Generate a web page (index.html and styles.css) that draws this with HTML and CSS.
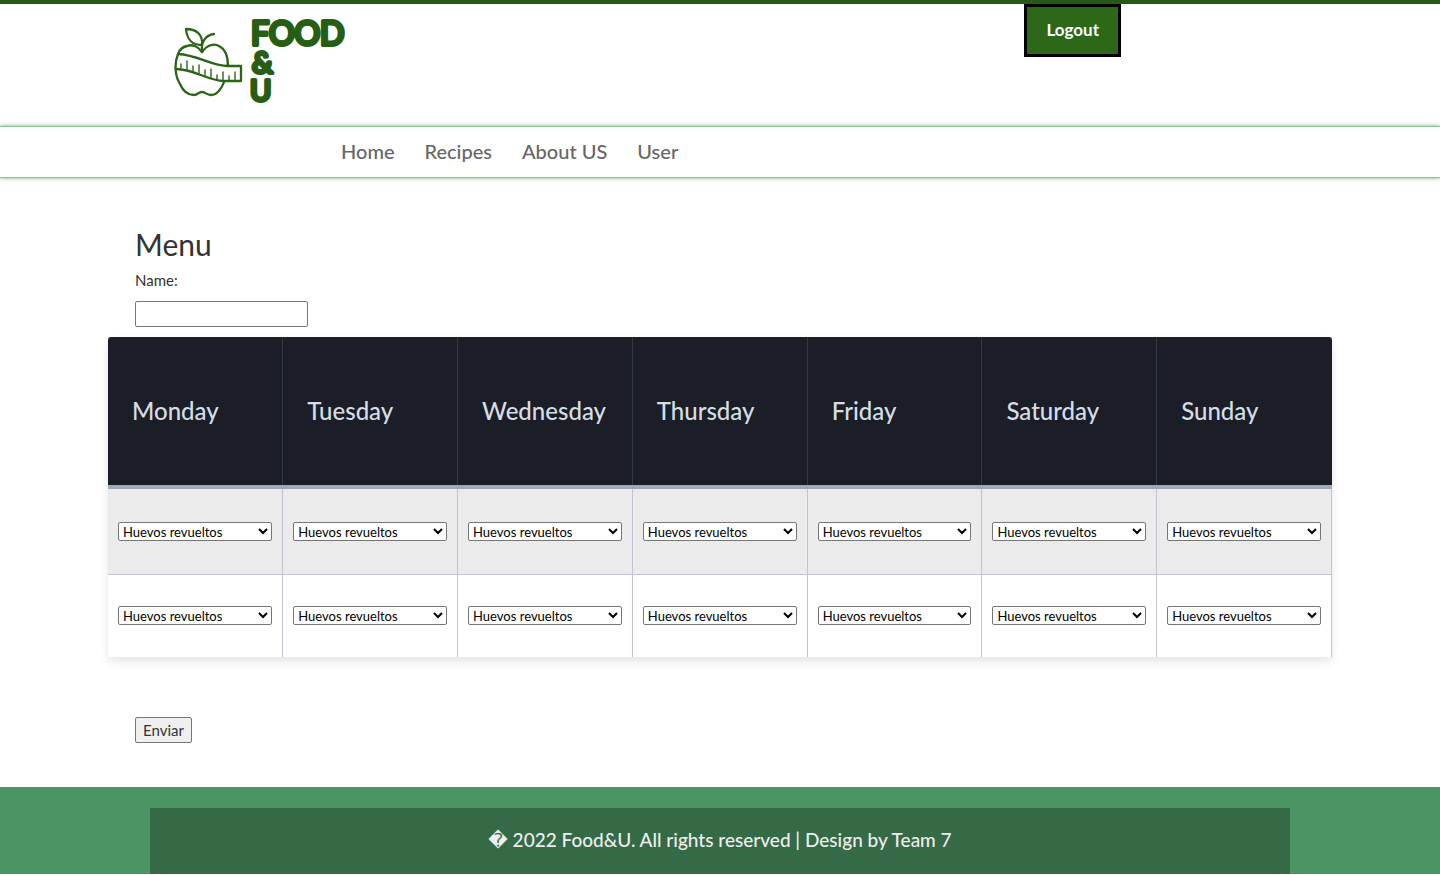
FILE: index.html
```html
<!DOCTYPE html>
<html lang="en">
<head>
<meta charset="utf-8">
<title>Food&amp;U - Menu</title>
<link rel="stylesheet" href="styles.css">
</head>
<body>
<header class="header">
  <div class="header-inner">
    <a class="logo" href="#" aria-label="Food&amp;U">
      <svg width="180" height="112" viewBox="0 -11 180 112">
        <g fill="none" stroke="#2b6416" stroke-width="2.3" stroke-linecap="round" stroke-linejoin="round">
          <path d="M28 37C24 31 18 29 13 31C8 32 5 36 4 39C0 49 1 61 6 69C9 76 14 80 20 80C24 80 24 77 28 77C32 77 32 80 37 80C43 80 48 73 50 67"/>
          <path d="M28 37C33 30 40 28 45 31C51 34 54 41 54 51"/>
          <path d="M28 36C27 28 31 20 40 19M28 30C29 20 23 14 12 14C13 24 17 30 28 30"/>
          <path d="M4 39C24 40 37 51 54 51H67V66H50C34 66 20 54 2 54"/>
          <path stroke-width="1.4" d="M7 53V49M13 54V46M19 56V51M25 58V50M31 61V55M37 63V54M43 65V60M49 66V57M55 66V61M61 66V57"/>
        </g>
        <g class="logo-text">
          <text x="77" y="30" font-size="32">FOOD</text>
          <text x="78" y="58" font-size="29">&amp;</text>
          <text x="76" y="86" font-size="29">U</text>
        </g>
      </svg>
    </a>
    <button class="logout" type="button">Logout</button>
  </div>
</header>
<nav class="nav">
  <ul class="nav-list">
    <li><a href="#">Home</a></li>
    <li><a href="#">Recipes</a></li>
    <li><a href="#">About US</a></li>
    <li><a href="#">User</a></li>
  </ul>
</nav>
<main>
  <form class="menu-form">
    <div class="container">
      <h1 class="title">Menu</h1>
      <label class="name-label" for="name">Name:</label>
      <input class="name-input" id="name" type="text">
    </div>
    <table class="menu-table">
      <thead>
        <tr><th>Monday</th><th>Tuesday</th><th>Wednesday</th><th>Thursday</th><th>Friday</th><th>Saturday</th><th>Sunday</th></tr>
      </thead>
      <tbody>
        <tr>
          <td><select aria-label="Monday, first meal"><option>Huevos revueltos</option></select></td>
          <td><select aria-label="Tuesday, first meal"><option>Huevos revueltos</option></select></td>
          <td><select aria-label="Wednesday, first meal"><option>Huevos revueltos</option></select></td>
          <td><select aria-label="Thursday, first meal"><option>Huevos revueltos</option></select></td>
          <td><select aria-label="Friday, first meal"><option>Huevos revueltos</option></select></td>
          <td><select aria-label="Saturday, first meal"><option>Huevos revueltos</option></select></td>
          <td><select aria-label="Sunday, first meal"><option>Huevos revueltos</option></select></td>
        </tr>
        <tr>
          <td><select aria-label="Monday, second meal"><option>Huevos revueltos</option></select></td>
          <td><select aria-label="Tuesday, second meal"><option>Huevos revueltos</option></select></td>
          <td><select aria-label="Wednesday, second meal"><option>Huevos revueltos</option></select></td>
          <td><select aria-label="Thursday, second meal"><option>Huevos revueltos</option></select></td>
          <td><select aria-label="Friday, second meal"><option>Huevos revueltos</option></select></td>
          <td><select aria-label="Saturday, second meal"><option>Huevos revueltos</option></select></td>
          <td><select aria-label="Sunday, second meal"><option>Huevos revueltos</option></select></td>
        </tr>
      </tbody>
    </table>
    <div class="container">
      <button class="submit" type="submit">Enviar</button>
    </div>
  </form>
</main>
<footer class="footer">
  <p class="copyright">&#xFFFD; 2022 Food&amp;U. All rights reserved | Design by Team 7</p>
</footer>
</body>
</html>
```

FILE: styles.css
```css
* { box-sizing: border-box; }
body {
  margin: 0;
  background: #fff;
  color: #333;
  font-family: Lato, "DejaVu Sans", sans-serif;
  font-size: 15px;
  line-height: 20px;
}
.header { border-top: 4px solid #275916; }
.header-inner {
  display: flex;
  justify-content: space-between;
  align-items: flex-start;
  max-width: 1170px;
  height: 122px;
  margin: 0 auto;
  padding: 0 184px 0 39px;
}
.logo { display: block; }
.logo svg { display: block; }
.logo-text {
  fill: #275e13;
  stroke: #275e13;
  stroke-width: 4;
  stroke-linejoin: round;
  font-family: Lato, sans-serif;
  font-weight: 400;
}
.logout {
  height: 53px;
  padding: 0 19px 2px;
  border: 3px solid #000;
  background: #2c6817;
  color: #fff;
  font: bold 17px/20px Lato, sans-serif;
}
.nav {
  border-top: 1px solid #8fbf94;
  border-bottom: 1px solid #8fbf94;
  box-shadow: 0 0 4px #7fb086;
}
.nav-list {
  display: flex;
  gap: 30px;
  max-width: 1170px;
  margin: 0 auto;
  padding: 14px 0 16px 206px;
  list-style: none;
  font-size: 20px;
  font-weight: 500;
}
.nav-list a { color: #666; text-decoration: none; }
.container { max-width: 1170px; margin: 0 auto; }
.title {
  margin: 0;
  padding: 50px 0 10px;
  font-size: 30px;
  font-weight: 400;
  line-height: 32px;
}
.name-label { display: block; margin-bottom: 11px; }
.name-input {
  display: block;
  width: 173px;
  height: 26px;
  border: 1px solid #767676;
  border-radius: 2px;
  font: inherit;
}
.menu-table {
  width: 85%;
  margin: 10px auto 60px;
  border-collapse: collapse;
  table-layout: fixed;
  border-radius: 3px;
  box-shadow: 0 5px 10px rgba(0, 0, 0, .1);
}
.menu-table th {
  height: 150px;
  padding: 0 24px;
  border-right: 1px solid #343a45;
  border-bottom: 4px solid #9ea8b6;
  background: #1b1e27;
  color: #d5dde5;
  font-size: 24px;
  font-weight: 500;
  line-height: 28px;
  text-align: left;
}
.menu-table th:first-child { border-top-left-radius: 3px; }
.menu-table th:last-child { border-top-right-radius: 3px; border-right: 0; }
.menu-table td {
  height: 83px;
  padding: 0 10px;
  border-right: 1px solid #c1c3d1;
}
.menu-table tbody tr:first-child td {
  height: 87px;
  border-bottom: 1px solid #c1c3d1;
  background: #ebebeb;
}
.menu-table select {
  display: block;
  width: 100%;
  height: 19px;
  padding: 0;
  border: 1px solid #767676;
  border-radius: 2px;
  background-color: #fff;
  color: #000;
  font: 13px Lato, sans-serif;
}
.submit {
  display: block;
  height: 26px;
  padding: 0 7px;
  border: 1px solid #767676;
  border-radius: 2px;
  background: #efefef;
  color: #333;
  font: inherit;
}
.footer {
  margin-top: 44px;
  padding: 21px 150px 0;
  background: #4a9563;
}
.copyright {
  margin: 0;
  padding: 19px 0 22px;
  background: #346a45;
  color: #eee;
  font-size: 19px;
  font-weight: 500;
  line-height: 25px;
  text-align: center;
}
```
